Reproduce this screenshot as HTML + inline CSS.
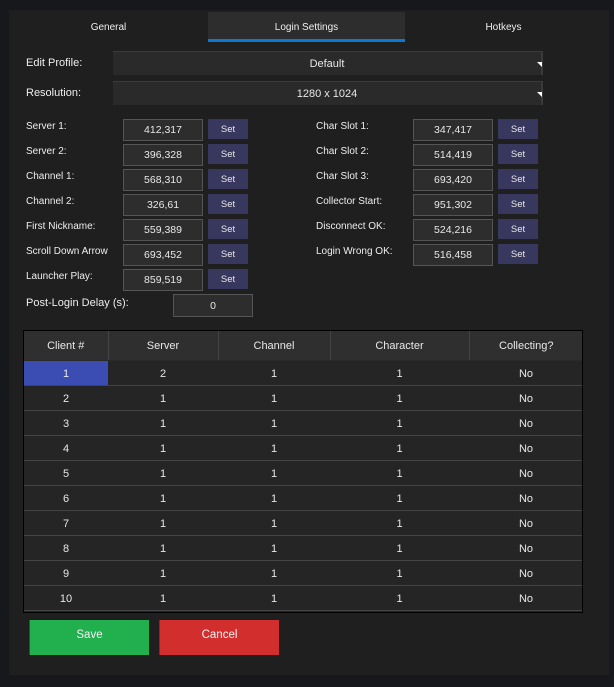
<!DOCTYPE html>
<html><head><meta charset="utf-8"><style>
*{margin:0;padding:0;box-sizing:border-box}
body{width:614px;height:687px;background:#16181c;font-family:"Liberation Sans",sans-serif;color:#e8e8e8;position:relative;overflow:hidden}
.a{position:absolute}
.panel{left:9px;top:10px;width:600px;height:665px;background:#1f1f1f}
.tab{top:12px;height:30px;font-size:10px;line-height:32px;text-align:center;color:#f0f0f0}
.combo{left:113px;width:430px;height:24px;background:#2a2a2a;border-top:1px solid #3c3c3c;border-right:2px solid #3a3a3a;font-size:11px;text-align:center;line-height:25px}
.tri{position:absolute;right:-1px;top:10px;width:0;height:0;border-left:5px solid transparent;border-top:5px solid #fff}
.lbl{font-size:10px;color:#eee}
.box{width:80px;height:22px;background:#2d2d2d;border:1px solid #555;font-size:10.5px;text-align:center;line-height:21px}
.set{width:40px;height:20px;background:#38375e;font-size:9.5px;text-align:center;line-height:21px}
table{border-collapse:collapse;font-size:11px}
.tbl{left:23px;top:330px;width:560px;height:283px;background:#252525;border:1px solid #000;overflow:hidden}
td,th{height:25px;text-align:center;border-bottom:1px solid #444;font-weight:normal;padding-top:2px}
th{height:29px;background:#2f2f2f;border-right:1px solid #444;border-bottom:1px solid #2a2a2a}
.btn{top:620px;width:120px;height:35px;font-size:11.5px;text-align:center;line-height:31px;color:#f4f4f4}
</style></head><body>
<div class="a panel"></div>
<div class="a tab" style="left:9px;width:199px">General</div>
<div class="a tab" style="left:208px;width:197px;background:#2d2d2d;border-bottom:3px solid #0a78d4">Login Settings</div>
<div class="a tab" style="left:405px;width:197px">Hotkeys</div>
<div class="a lbl" style="left:26px;top:57px;font-size:11px">Edit Profile:</div>
<div class="a combo" style="top:51px">Default<div class="tri"></div></div>
<div class="a lbl" style="left:26px;top:87px;font-size:11px">Resolution:</div>
<div class="a combo" style="top:81px">1280 x 1024<div class="tri"></div></div>

<div class="a lbl" style="left:26px;top:121px">Server 1:</div><div class="a box" style="left:123px;top:119px">412,317</div><div class="a set" style="left:208px;top:119px">Set</div>
<div class="a lbl" style="left:26px;top:146px">Server 2:</div><div class="a box" style="left:123px;top:144px">396,328</div><div class="a set" style="left:208px;top:144px">Set</div>
<div class="a lbl" style="left:26px;top:171px">Channel 1:</div><div class="a box" style="left:123px;top:169px">568,310</div><div class="a set" style="left:208px;top:169px">Set</div>
<div class="a lbl" style="left:26px;top:196px">Channel 2:</div><div class="a box" style="left:123px;top:194px">326,61</div><div class="a set" style="left:208px;top:194px">Set</div>
<div class="a lbl" style="left:26px;top:221px">First Nickname:</div><div class="a box" style="left:123px;top:219px">559,389</div><div class="a set" style="left:208px;top:219px">Set</div>
<div class="a lbl" style="left:26px;top:246px">Scroll Down Arrow</div><div class="a box" style="left:123px;top:244px">693,452</div><div class="a set" style="left:208px;top:244px">Set</div>
<div class="a lbl" style="left:26px;top:271px">Launcher Play:</div><div class="a box" style="left:123px;top:269px">859,519</div><div class="a set" style="left:208px;top:269px">Set</div>

<div class="a lbl" style="left:316px;top:121px">Char Slot 1:</div><div class="a box" style="left:413px;top:119px">347,417</div><div class="a set" style="left:498px;top:119px">Set</div>
<div class="a lbl" style="left:316px;top:146px">Char Slot 2:</div><div class="a box" style="left:413px;top:144px">514,419</div><div class="a set" style="left:498px;top:144px">Set</div>
<div class="a lbl" style="left:316px;top:171px">Char Slot 3:</div><div class="a box" style="left:413px;top:169px">693,420</div><div class="a set" style="left:498px;top:169px">Set</div>
<div class="a lbl" style="left:316px;top:196px">Collector Start:</div><div class="a box" style="left:413px;top:194px">951,302</div><div class="a set" style="left:498px;top:194px">Set</div>
<div class="a lbl" style="left:316px;top:221px">Disconnect OK:</div><div class="a box" style="left:413px;top:219px">524,216</div><div class="a set" style="left:498px;top:219px">Set</div>
<div class="a lbl" style="left:316px;top:246px">Login Wrong OK:</div><div class="a box" style="left:413px;top:244px">516,458</div><div class="a set" style="left:498px;top:244px">Set</div>

<div class="a lbl" style="left:26px;top:297px;font-size:11px">Post-Login Delay (s):</div>
<div class="a box" style="left:173px;top:294px;height:23px;line-height:22px">0</div>

<div class="a tbl"><table style="width:559px">
<tr><th style="width:84px">Client #</th><th style="width:110px">Server</th><th style="width:112px">Channel</th><th style="width:139px">Character</th><th style="border-right:none">Collecting?</th></tr>
<tr><td style="background:#3b4db3">1</td><td>2</td><td>1</td><td>1</td><td>No</td></tr>
<tr><td>2</td><td>1</td><td>1</td><td>1</td><td>No</td></tr>
<tr><td>3</td><td>1</td><td>1</td><td>1</td><td>No</td></tr>
<tr><td>4</td><td>1</td><td>1</td><td>1</td><td>No</td></tr>
<tr><td>5</td><td>1</td><td>1</td><td>1</td><td>No</td></tr>
<tr><td>6</td><td>1</td><td>1</td><td>1</td><td>No</td></tr>
<tr><td>7</td><td>1</td><td>1</td><td>1</td><td>No</td></tr>
<tr><td>8</td><td>1</td><td>1</td><td>1</td><td>No</td></tr>
<tr><td>9</td><td>1</td><td>1</td><td>1</td><td>No</td></tr>
<tr><td>10</td><td>1</td><td>1</td><td>1</td><td>No</td></tr>
</table></div>

<div class="a btn" style="left:29px;background:#22b04f;border-left:1px solid #444">Save</div>
<div class="a btn" style="left:159px;background:#d22e2e;border-left:1px solid #444">Cancel</div>
</body></html>
